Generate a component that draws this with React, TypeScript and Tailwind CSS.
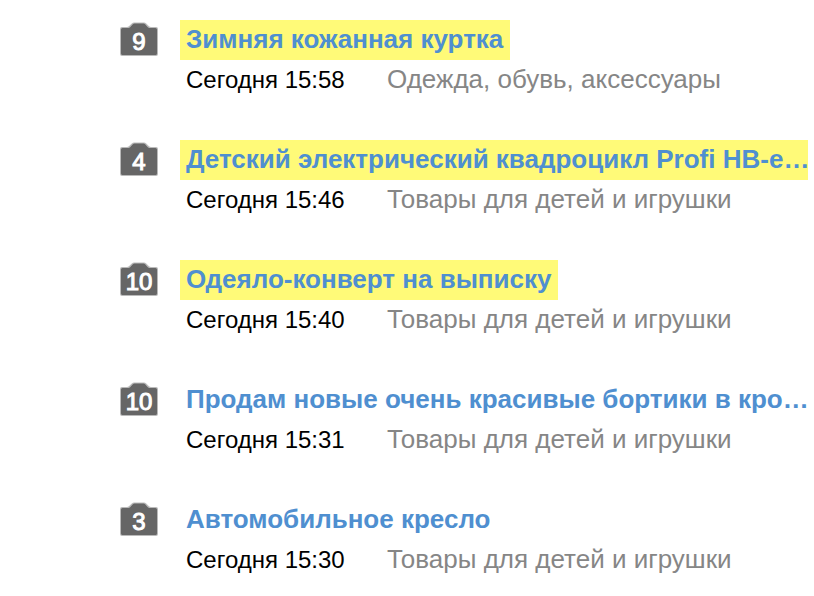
type Listing = {
  id: number;
  photos: number;
  title: string;
  time: string;
  category: string;
  highlighted: boolean;
};

const listings: Listing[] = [
  { id: 1, photos: 9, title: "Зимняя кожанная куртка", time: "Сегодня 15:58", category: "Одежда, обувь, аксессуары", highlighted: true },
  { id: 2, photos: 4, title: "Детский электрический квадроцикл Profi HB-e…", time: "Сегодня 15:46", category: "Товары для детей и игрушки", highlighted: true },
  { id: 3, photos: 10, title: "Одеяло-конверт на выписку", time: "Сегодня 15:40", category: "Товары для детей и игрушки", highlighted: true },
  { id: 4, photos: 10, title: "Продам новые очень красивые бортики в кро…", time: "Сегодня 15:31", category: "Товары для детей и игрушки", highlighted: false },
  { id: 5, photos: 3, title: "Автомобильное кресло", time: "Сегодня 15:30", category: "Товары для детей и игрушки", highlighted: false },
];

function PhotoCount({ count }: { count: number }) {
  return (
    <div className="relative mt-px h-9 w-[38px] shrink-0">
      <svg viewBox="0 0 38 36" className="h-9 w-[38px]" aria-hidden="true">
        <path
          d="M2 6H7C10 6 11 1.6 14 1.6H24C27 1.6 28 6 31 6H36Q38 6 38 8V33Q38 35 36 35H2Q0 35 0 33V8Q0 6 2 6Z"
          fill="#666"
          fillOpacity="0.45"
        />
        <path
          d="M2.5 7H8.5C11 7 12 2.5 14.5 2.5H23.5C26 2.5 27 7 29.500 7H35.5Q37 7 37 8.5V32.5Q37 34 35.5 34H2.5Q1 34 1 32.5V8.5Q1 7 2.5 7Z"
          fill="#666"
        />
      </svg>
      <span className="absolute inset-0 flex items-center justify-center pt-1.5 text-[24px] leading-6 text-white [-webkit-text-stroke:1px_white]">
        {count}
      </span>
    </div>
  );
}

function ListingRow({ item }: { item: Listing }) {
  return (
    <li className="flex h-20 items-start">
      <PhotoCount count={item.photos} />
      <div className="ml-[22px] min-w-0 flex-1">
        <h2 className="flex h-10">
          <a
            href="#"
            className={`block max-w-full pr-[7px] pb-0.5 pl-1.5 text-[26px] leading-[38px] font-bold whitespace-nowrap text-[#4f8fd0] ${
              item.highlighted ? "bg-[#fffa78]" : ""
            }`}
          >
            {item.title}
          </a>
        </h2>
        <p className="flex h-10 items-baseline pl-1.5 text-[26px] leading-[38px] whitespace-nowrap">
          <time className="w-[201px] text-[24px] text-black">{item.time}</time>
          <span className="text-[#868686]">{item.category}</span>
        </p>
      </div>
    </li>
  );
}

export default function App() {
  return (
    <main className="bg-white pt-5 pr-1.5 pl-[120px] font-['Liberation_Sans',Arial,sans-serif]">
      <ul className="flex flex-col gap-10">
        {listings.map((item) => (
          <ListingRow key={item.id} item={item} />
        ))}
      </ul>
    </main>
  );
}
